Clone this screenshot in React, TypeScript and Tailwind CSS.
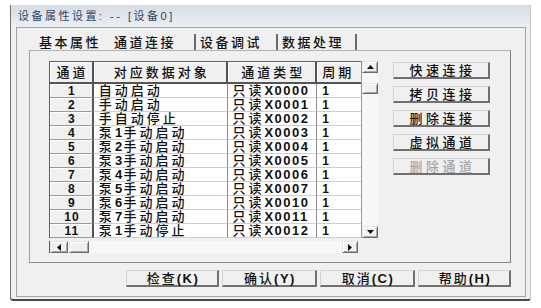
import React from "react";

const FONT = "font-['Liberation_Sans','Noto_Sans_CJK_SC',sans-serif]";

const rows: [string, string, string][] = [
  ["1", "自动启动", "只读X0000"],
  ["2", "手动启动", "只读X0001"],
  ["3", "手自动停止", "只读X0002"],
  ["4", "泵1手动启动", "只读X0003"],
  ["5", "泵2手动启动", "只读X0004"],
  ["6", "泵3手动启动", "只读X0005"],
  ["7", "泵4手动启动", "只读X0006"],
  ["8", "泵5手动启动", "只读X0007"],
  ["9", "泵6手动启动", "只读X0010"],
  ["10", "泵7手动启动", "只读X0011"],
  ["11", "泵1手动停止", "只读X0012"],
];

// ascii parts look bold in the original dialog
function Mixed({ text }: { text: string }) {
  return (
    <>
      {text.split(/([\x00-\x7F]+)/).map((p, i) =>
        /[\x00-\x7F]/.test(p) ? (
          <b key={i} className="font-bold tracking-[1.5px]">{p}</b>
        ) : (
          <span key={i}>{p}</span>
        )
      )}
    </>
  );
}

function Arrow({ dir }: { dir: "up" | "down" | "left" | "right" }) {
  const pts = {
    up: "0,4 3.5,0 7,4",
    down: "0,0 3.5,4 7,0",
    left: "4,0 0,3.5 4,7",
    right: "0,0 4,3.5 0,7",
  }[dir];
  const vb = dir === "up" || dir === "down" ? "0 0 7 4" : "0 0 4 7";
  const size = dir === "up" || dir === "down" ? "w-[7px] h-[4px]" : "w-[4px] h-[7px]";
  return (
    <svg viewBox={vb} className={size}>
      <polygon points={pts} fill="#111" />
    </svg>
  );
}

const bevel =
  "bg-[#f0f0f0] border-t border-l border-t-[#e6e6e6] border-l-[#e6e6e6] border-r border-b border-r-[#6a6a6a] border-b-[#6a6a6a] shadow-[inset_1px_1px_0_#fff,inset_-1px_-1px_0_#a8a8a8]";

function SideButton({ label, disabled }: { label: string; disabled?: boolean }) {
  return (
    <div
      className={`flex items-center justify-center w-[97px] h-[17px] pl-[3px] text-[13px] font-medium leading-none tracking-[3.5px] bg-[#f0f0f0] border-t border-l border-t-[#d4d4d4] border-l-[#d4d4d4] border-r-2 border-b-2 border-r-[#707070] border-b-[#707070] ${
        disabled ? "text-[#a6a6a6]" : "text-[#111]"
      }`}
    >
      {label}
    </div>
  );
}

function BottomButton({ label, wide }: { label: string; wide?: boolean }) {
  return (
    <div
      className={`flex items-center justify-center h-[17px] pl-[2px] text-[13px] font-medium leading-none tracking-[2px] text-[#111] bg-[#f0f0f0] border-t border-l border-t-[#d4d4d4] border-l-[#d4d4d4] border-r-2 border-b-2 border-r-[#707070] border-b-[#707070] ${
        wide ? "w-[95px]" : "w-[93px]"
      }`}
    >
      <Mixed text={label} />
    </div>
  );
}

function Grid() {
  return (
    <div className="flex flex-col w-[329px]">
      <div className="flex">
        <div className="w-[312px] border-t border-l border-[#5c5c5c] bg-white overflow-hidden">
          {/* header */}
          <div className="flex h-[22px] text-[13px] font-medium leading-none tracking-[3px] text-[#111]">
            <div className="w-[44px] flex items-center justify-center pl-[3px] bg-[#f0f0f0] border-r-2 border-b-2 border-[#555] shadow-[inset_1px_1px_0_#fff]">通道</div>
            <div className="w-[135px] flex items-center justify-center pl-[3px] bg-[#f0f0f0] border-r-2 border-b-2 border-[#555] shadow-[inset_1px_1px_0_#fff]">对应数据对象</div>
            <div className="w-[89px] flex items-center justify-center pl-[3px] bg-[#f0f0f0] border-r-2 border-b-2 border-[#555] shadow-[inset_1px_1px_0_#fff]">通道类型</div>
            <div className="w-[44px] flex items-center pl-[5px] bg-[#f0f0f0] border-b-2 border-[#555] shadow-[inset_1px_1px_0_#fff] whitespace-nowrap">周期</div>
          </div>
          {rows.map(([n, obj, type]) => (
            <div key={n} className="flex h-[14px] text-[13px] font-medium leading-none tracking-[3px] text-[#111]">
              <div className="w-[44px] flex items-center justify-center pl-[2px] text-[12px] font-bold tracking-[1px] bg-[#f0f0f0] border-r-2 border-r-[#555] border-b border-b-[#9a9a9a] shadow-[inset_1px_1px_0_#fff]">
                {n}
              </div>
              <div className="w-[135px] flex items-center pl-[5px] border-r border-r-[#8c8c8c] border-b border-b-[#cfcfcf] whitespace-nowrap">
                <Mixed text={obj} />
              </div>
              <div className="w-[89px] flex items-center pl-[4px] border-r border-r-[#8c8c8c] border-b border-b-[#cfcfcf] whitespace-nowrap">
                <Mixed text={type} />
              </div>
              <div className="w-[44px] flex items-center pl-[5px] border-b border-b-[#cfcfcf] font-bold text-[12px]">1</div>
            </div>
          ))}
        </div>
        {/* vertical scrollbar */}
        <div className="w-[17px] flex flex-col bg-[#f7f7f7] border-l border-[#9a9a9a]">
          <div className={`h-[12px] flex items-center justify-center ${bevel}`}>
            <Arrow dir="up" />
          </div>
          <div className={`h-[11px] mt-[10px] ${bevel}`} />
          <div className="flex-1" />
          <div className={`h-[12px] flex items-center justify-center ${bevel}`}>
            <Arrow dir="down" />
          </div>
        </div>
      </div>
      {/* horizontal scrollbar */}
      <div className="flex mt-[3px] h-[12px]">
        <div className="w-[309px] flex bg-[#f7f7f7] border-l border-[#5c5c5c]">
          <div className={`w-[18px] flex items-center justify-center ${bevel}`}>
            <Arrow dir="left" />
          </div>
          <div className={`w-[20px] ml-px ${bevel}`} />
          <div className="flex-1" />
          <div className={`w-[16px] flex items-center justify-center ${bevel}`}>
            <Arrow dir="right" />
          </div>
        </div>
      </div>
    </div>
  );
}

export default function App() {
  return (
    <div className={`w-[541px] h-[308px] bg-white pl-[10px] pt-[5px] ${FONT}`}>
      <div className="w-[521px] h-[296px] flex flex-col bg-[#f0f0f0] border-l border-l-[#6e6e6e] border-r border-r-[#c4c4c4] border-b-2 border-b-[#4a4a4a] rounded-bl-[3px] rounded-br-[3px]">
        {/* title bar */}
        <div className="h-[22px] flex items-center pl-[7px] bg-gradient-to-b from-[#d6dce4] to-[#eceff3] text-[11px] leading-none tracking-[2.5px] text-[#34435e]">
          设备属性设置: -- [设备0]
        </div>

        {/* inner frame */}
        <div className="ml-[5px] w-[510px] h-[270px] flex flex-col border border-[#a3a3a3] pt-[4px] pl-[12px] pr-[14px]">
          {/* tabs */}
          <div className="flex h-[18px] items-end text-[13px] font-medium leading-none tracking-[2.5px] text-[#111]">
            <div className="w-[77px] h-[16px] flex items-center pl-[10px]">基本属性</div>
            <div className="w-[90px] h-[16px] flex items-center pl-[8px] border-r-2 border-[#6a6a6a]">通道连接</div>
            <div className="w-[82px] h-[16px] flex items-center pl-[4px] border-r-2 border-[#6a6a6a]">设备调试</div>
            <div className="w-[79px] h-[16px] flex items-center pl-[4px] border-r-2 border-[#6a6a6a]">数据处理</div>
          </div>

          {/* tab panel */}
          <div className="h-[213px] flex border border-t-[#b4b4b4] border-l-[#a0a0a0] border-r-[#7c7c7c] border-b-[#8a8a8a] pl-[19px] pt-[10px]">
            <Grid />
            <div className="ml-[15px] mt-[1px] flex flex-col gap-[7px]">
              <SideButton label="快速连接" />
              <SideButton label="拷贝连接" />
              <SideButton label="删除连接" />
              <SideButton label="虚拟通道" />
              <SideButton label="删除通道" disabled />
            </div>
          </div>

          {/* dialog buttons */}
          <div className="mt-[7px] flex justify-end gap-[3px]">
            <BottomButton label="检查(K)" />
            <BottomButton label="确认(Y)" wide />
            <BottomButton label="取消(C)" wide />
            <BottomButton label="帮助(H)" />
          </div>
        </div>
      </div>
    </div>
  );
}
